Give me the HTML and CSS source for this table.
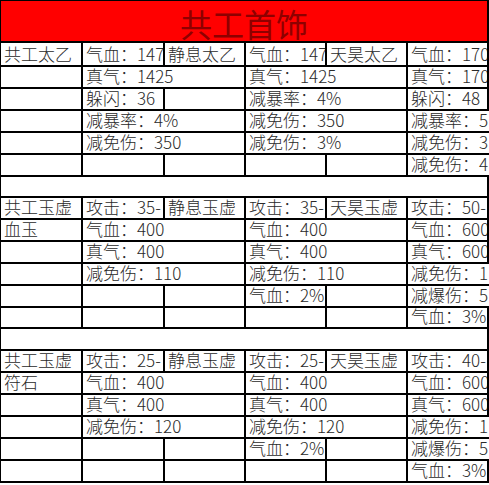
FILE: index.html
```html
<!DOCTYPE html>
<html lang="zh">
<head>
<meta charset="utf-8">
<title>共工首饰</title>
<link rel="stylesheet" href="styles.css">
</head>
<body>
<div class="sheet">
  <div class="c s6 title">共工首饰</div><div class="c g"></div>

  <div class="c">共工太乙</div><div class="c">气血：147</div><div class="c">静息太乙</div><div class="c">气血：147</div><div class="c">天昊太乙</div><div class="c">气血：170</div><div class="c g"></div>
  <div class="c"></div><div class="c s2">真气：1425</div><div class="c s2">真气：1425</div><div class="c">真气：170</div><div class="c g"></div>
  <div class="c"></div><div class="c">躲闪：36</div><div class="c"></div><div class="c s2">减暴率：4%</div><div class="c">躲闪：48</div><div class="c g"></div>
  <div class="c"></div><div class="c s2">减暴率：4%</div><div class="c s2">减免伤：350</div><div class="c s2">减暴率：5</div>
  <div class="c"></div><div class="c s2">减免伤：350</div><div class="c s2">减免伤：3%</div><div class="c s2">减免伤：3</div>
  <div class="c"></div><div class="c"></div><div class="c"></div><div class="c"></div><div class="c"></div><div class="c s2">减免伤：4</div>
  <div class="c s6"></div><div class="c g"></div>

  <div class="c">共工玉虚</div><div class="c">攻击：35-</div><div class="c">静息玉虚</div><div class="c">攻击：35-</div><div class="c">天昊玉虚</div><div class="c">攻击：50-</div><div class="c g"></div>
  <div class="c">血玉</div><div class="c s2">气血：400</div><div class="c s2">气血：400</div><div class="c">气血：600</div><div class="c g"></div>
  <div class="c"></div><div class="c s2">真气：400</div><div class="c s2">真气：400</div><div class="c">真气：600</div><div class="c g"></div>
  <div class="c"></div><div class="c s2">减免伤：110</div><div class="c s2">减免伤：110</div><div class="c s2">减免伤：1</div>
  <div class="c"></div><div class="c"></div><div class="c"></div><div class="c">气血：2%</div><div class="c"></div><div class="c s2">减爆伤：5</div>
  <div class="c"></div><div class="c"></div><div class="c"></div><div class="c"></div><div class="c"></div><div class="c">气血：3%</div><div class="c g"></div>
  <div class="c s6"></div><div class="c g"></div>

  <div class="c">共工玉虚</div><div class="c">攻击：25-</div><div class="c">静息玉虚</div><div class="c">攻击：25-</div><div class="c">天昊玉虚</div><div class="c">攻击：40-</div><div class="c g"></div>
  <div class="c">符石</div><div class="c s2">气血：400</div><div class="c s2">气血：400</div><div class="c">气血：600</div><div class="c g"></div>
  <div class="c"></div><div class="c s2">真气：400</div><div class="c s2">真气：400</div><div class="c">真气：600</div><div class="c g"></div>
  <div class="c"></div><div class="c s2">减免伤：120</div><div class="c s2">减免伤：120</div><div class="c s2">减免伤：1</div>
  <div class="c"></div><div class="c"></div><div class="c"></div><div class="c">气血：2%</div><div class="c"></div><div class="c s2">减爆伤：5</div>
  <div class="c"></div><div class="c"></div><div class="c"></div><div class="c"></div><div class="c"></div><div class="c">气血：3%</div><div class="c g"></div>
</div>
</body>
</html>
```

FILE: styles.css
```css
html, body {
  margin: 0;
  padding: 0;
  background: #fff;
  overflow: hidden;
}

.sheet {
  display: grid;
  width: 488px;
  background: #000;
  padding: 1px 0 2px 1px;
  gap: 2px;
  grid-template-columns: 80px 80px 79px 79px 79px 79px 0px;
  grid-template-rows:
    40px 22px 20px 20px 20px 20px 20px 19px
    20px 20px 20px 20px 20px 19px 20px
    20px 20px 20px 20px 20px 20px;
  font-family: "Noto Sans CJK SC", sans-serif;
  font-weight: 300;
  font-size: 17px;
  line-height: 17px;
  color: #2a2a2a;
}

.c {
  background: #fff;
  display: flex;
  align-items: flex-end;
  padding: 0 0 3px 3px;
  white-space: nowrap;
  overflow: hidden;
  min-width: 0;
}

.g {
  padding: 0;
}

.s2 {
  grid-column: span 2;
}

.s6 {
  grid-column: span 6;
}

.title {
  background: #ff0000;
  color: #8e0000;
  font-size: 32px;
  line-height: 32px;
  font-weight: 400;
  justify-content: center;
  align-items: center;
  padding: 4px 0 0 0;
}
```
